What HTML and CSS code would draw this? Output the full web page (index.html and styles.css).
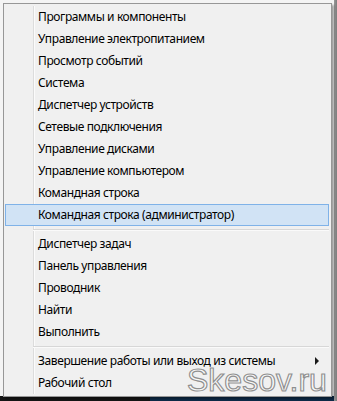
FILE: index.html
```html
<!DOCTYPE html>
<html lang="ru">
<head>
<meta charset="utf-8">
<title>Меню Win+X</title>
<link rel="stylesheet" href="styles.css">
</head>
<body>
<div class="desk">
  <ul class="menu">
    <li class="item">Программы и компоненты</li>
    <li class="item">Управление электропитанием</li>
    <li class="item">Просмотр событий</li>
    <li class="item">Система</li>
    <li class="item">Диспетчер устройств</li>
    <li class="item">Сетевые подключения</li>
    <li class="item">Управление дисками</li>
    <li class="item">Управление компьютером</li>
    <li class="item">Командная строка</li>
    <li class="item active">Командная строка (администратор)</li>
    <li class="sep"></li>
    <li class="item">Диспетчер задач</li>
    <li class="item">Панель управления</li>
    <li class="item">Проводник</li>
    <li class="item">Найти</li>
    <li class="item">Выполнить</li>
    <li class="sep"></li>
    <li class="item sub"><span>Завершение работы или выход из системы</span><i class="arrow"></i></li>
    <li class="item">Рабочий стол</li>
  </ul>
  <div class="watermark">Skesov.ru</div>
</div>
</body>
</html>
```

FILE: styles.css
```css
html, body {
  margin: 0;
  padding: 0;
}
body {
  width: 337px;
  height: 401px;
  overflow: hidden;
  background:
    linear-gradient(to right, #151515 0, #151515 150px, #0d2a48 150px) 0 396px / 100% 5px no-repeat,
    #f4f4f4;
  font-family: "Noto Sans", "Open Sans", sans-serif;
}
.desk {
  position: relative;
  width: 337px;
  height: 401px;
  background:
    linear-gradient(to right, transparent 0, transparent 334px, #9a9a9a 334px, #7c7c7c 337px);
}
.menu {
  list-style: none;
  margin: 0;
  position: relative;
  top: 3px;
  left: 3px;
  width: 327px;
  padding: 2px 0;
  border: 1px solid #979797;
  background:
    linear-gradient(to right, transparent 29px, #dcdcdc 29px, #dcdcdc 30px, #fbfbfb 30px, #fbfbfb 31px, transparent 31px),
    #f0f0f0;
  background-size: 100% calc(100% - 4px);
  background-position: 0 2px;
  background-repeat: no-repeat;
  box-shadow: 2px 2px 2px rgba(0, 0, 0, 0.35);
}
.item {
  display: flex;
  align-items: center;
  justify-content: space-between;
  box-sizing: border-box;
  height: 22px;
  margin: 0 2px 0 1px;
  padding: 0 9px 0 32px;
  border: 1px solid transparent;
  font-size: 12px;
  line-height: 14px;
  letter-spacing: -0.4px;
  color: #000;
  white-space: nowrap;
}
.item.active {
  background: #d1e3f5;
  border-color: #7fb2e8;
}
.sep {
  height: 7px;
  margin: 0 2px 0 29px;
  background: linear-gradient(to bottom, transparent 3px, #d7d7d7 3px, #d7d7d7 4px, #fafafa 4px, #fafafa 5px, transparent 5px);
}
.arrow {
  display: block;
  width: 0;
  height: 0;
  border-left: 4px solid #1a1a1a;
  border-top: 4px solid transparent;
  border-bottom: 4px solid transparent;
}
.watermark {
  position: absolute;
  left: 187px;
  top: 370px;
  font-family: "Liberation Sans", sans-serif;
  font-size: 32px;
  line-height: 0.66;
  color: rgba(255, 255, 255, 0.6);
  -webkit-text-stroke: 1.2px rgba(110, 110, 110, 0.75);
  pointer-events: none;
}
```
